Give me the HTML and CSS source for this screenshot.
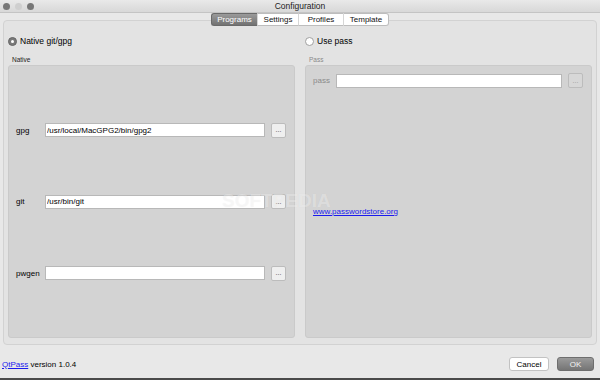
FILE: index.html
```html
<!doctype html>
<html lang="en">
    <head>
        <meta charset="utf-8">
        <title>Configuration</title>
        <link rel="stylesheet" href="styles.css">
    </head>
    <body>
        <div class="window">
            <div class="titleBar">
                <div class="lights">
                    <span class="light dark"></span>
                    <span class="light pale"></span>
                    <span class="light dark"></span>
                </div>
                <div class="title">Configuration</div>
            </div>

            <div class="tabBar">
                <span class="tab selected">Programs</span>
                <span class="tab">Settings</span>
                <span class="tab">Profiles</span>
                <span class="tab last">Template</span>
            </div>

            <div class="pane">
                <div class="column">
                    <label class="radio"><span class="dot checked"></span>Native git/gpg</label>
                    <div class="groupTitle">Native</div>
                    <div class="groupBox native">
                        <div class="row">
                            <span class="rowLabel">gpg</span>
                            <input class="field" value="/usr/local/MacGPG2/bin/gpg2">
                            <button class="browse">...</button>
                        </div>
                        <div class="row">
                            <span class="rowLabel">git</span>
                            <input class="field" value="/usr/bin/git">
                            <button class="browse">...</button>
                        </div>
                        <div class="row">
                            <span class="rowLabel">pwgen</span>
                            <input class="field" value="">
                            <button class="browse">...</button>
                        </div>
                    </div>
                </div>

                <div class="column">
                    <label class="radio"><span class="dot"></span>Use pass</label>
                    <div class="groupTitle disabled">Pass</div>
                    <div class="groupBox pass">
                        <div class="row">
                            <span class="rowLabel disabled passLabel">pass</span>
                            <input class="field" value="" disabled>
                            <button class="browse" disabled>...</button>
                        </div>
                        <a class="storeLink" href="#">www.passwordstore.org</a>
                    </div>
                </div>
            </div>

            <div class="footer">
                <div class="version"><a href="#">QtPass</a> version 1.0.4</div>
                <div class="buttons">
                    <button class="pushButton">Cancel</button>
                    <button class="pushButton default">OK</button>
                </div>
            </div>

            <div class="watermark">SOFTPEDIA</div>
        </div>
    </body>
</html>
```

FILE: styles.css
```css
body {
    margin: 0;
    font-family: 'Liberation Sans', Arial, sans-serif;
    color: #111;
}

.window {
    position: relative;
    width: 600px;
    height: 380px;
    background: #e8e8e8;
    border-bottom: 2px solid #4a4a4a;
    box-sizing: border-box;
    display: flex;
    flex-direction: column;
    overflow: hidden;
}

.titleBar {
    height: 12px;
    background: linear-gradient(#e9e9e9, #d8d8d8);
    border-bottom: 1px solid #c4c4c4;
    display: flex;
    align-items: center;
    justify-content: center;
    position: relative;
}

.lights {
    position: absolute;
    left: 3px;
    top: 3px;
    display: flex;
    gap: 5px;
}

.light {
    width: 7px;
    height: 7px;
    border-radius: 50%;
}

.light.dark {
    background: #777;
}

.light.pale {
    background: #cfcfcf;
}

.title {
    font-size: 8.5px;
    color: #222;
}

.tabBar {
    display: flex;
    justify-content: center;
    height: 13px;
    margin-bottom: -6px;
    position: relative;
    z-index: 1;
}

.tab {
    font-size: 8px;
    line-height: 12px;
    height: 13px;
    background: #fff;
    border: 1px solid #bdbdbd;
    border-left: 1px solid #d6d6d6;
    border-right: 0;
    box-sizing: border-box;
    text-align: center;
    color: #111;
}

.tab:nth-child(1) { width: 46px; }
.tab:nth-child(2) { width: 41px; }
.tab:nth-child(3) { width: 45px; }
.tab:nth-child(4) { width: 46px; }

.tab.selected {
    background: linear-gradient(#9a9a9a, #727272);
    border-color: #6a6a6a;
    color: #fff;
    border-radius: 3px 0 0 3px;
}

.tab.last {
    border-right: 1px solid #bdbdbd;
    border-radius: 0 3px 3px 0;
}

.pane {
    margin: 0 3px;
    height: 325px;
    box-sizing: border-box;
    background: #e3e3e3;
    border: 1px solid #d2d2d2;
    border-radius: 4px;
    padding: 15px 4px 6px 4px;
    display: flex;
    gap: 10px;
}

.column {
    flex: 1;
    display: flex;
    flex-direction: column;
}

.radio {
    display: flex;
    align-items: center;
    font-size: 8.5px;
    height: 10px;
    gap: 3px;
    color: #000;
}

.dot {
    width: 9px;
    height: 9px;
    border-radius: 50%;
    background: #fff;
    border: 1px solid #a0a0a0;
    box-sizing: border-box;
    display: flex;
    align-items: center;
    justify-content: center;
}

.dot.checked {
    background: #7a7a7a;
    border-color: #666;
}

.dot.checked::after {
    content: "";
    width: 3px;
    height: 3px;
    border-radius: 50%;
    background: #fff;
}

.groupTitle {
    font-size: 6.5px;
    margin-top: 10px;
    margin-left: 4px;
    height: 7px;
    line-height: 7px;
    color: #222;
}

.groupTitle.disabled {
    color: #8a8a8a;
}

.groupBox {
    margin-top: 2px;
    flex: 1;
    background: #d3d3d3;
    border: 1px solid #cacaca;
    border-radius: 3px;
    display: flex;
    flex-direction: column;
}

.groupBox.native {
    justify-content: space-evenly;
}

.groupBox.pass {
    padding-top: 7px;
}

.row {
    display: flex;
    align-items: center;
    height: 15px;
    padding: 0 8px 0 7px;
}

.rowLabel {
    font-size: 8px;
    width: 29px;
    flex: none;
    color: #000;
}

.passLabel {
    width: 23px;
}

.rowLabel.disabled {
    color: #8a8a8a;
}

.field {
    flex: 1;
    min-width: 0;
    height: 14px;
    box-sizing: border-box;
    border: 1px solid #b8b8b8;
    background: #fff;
    font-family: 'Liberation Sans', Arial, sans-serif;
    font-size: 8px;
    padding: 0 1px;
    margin: 0 6px 0 0;
    color: #000;
}

.browse {
    width: 15px;
    height: 15px;
    flex: none;
    padding: 0;
    border: 1px solid #bcbcbc;
    border-radius: 2px;
    background: #efefef;
    font-size: 7px;
    line-height: 10px;
    color: #444;
}

.browse:disabled {
    background: #d7d7d7;
    color: #999;
}

.storeLink {
    margin: 119px 0 0 7px;
    font-size: 8px;
    color: #1a1aee;
}

.footer {
    flex: 1;
    display: flex;
    align-items: center;
    justify-content: space-between;
    padding: 5px 6px 0 2px;
}

.version {
    font-size: 8px;
    color: #000;
}

.version a {
    color: #1a1aee;
}

.buttons {
    display: flex;
    gap: 8px;
}

.pushButton {
    height: 14px;
    width: 40px;
    padding: 0;
    font-family: 'Liberation Sans', Arial, sans-serif;
    font-size: 8px;
    background: #fff;
    border: 1px solid #c2c2c2;
    border-radius: 3px;
    color: #000;
}

.pushButton.default {
    width: 37px;
    background: linear-gradient(#9a9a9a, #757575);
    border-color: #6e6e6e;
    color: #f4f4f4;
}

.watermark {
    position: absolute;
    left: 222px;
    top: 190px;
    font-size: 19px;
    font-weight: bold;
    color: rgba(255, 255, 255, 0.4);
    text-shadow: 0 0 1px rgba(0, 0, 0, 0.06);
}
```
